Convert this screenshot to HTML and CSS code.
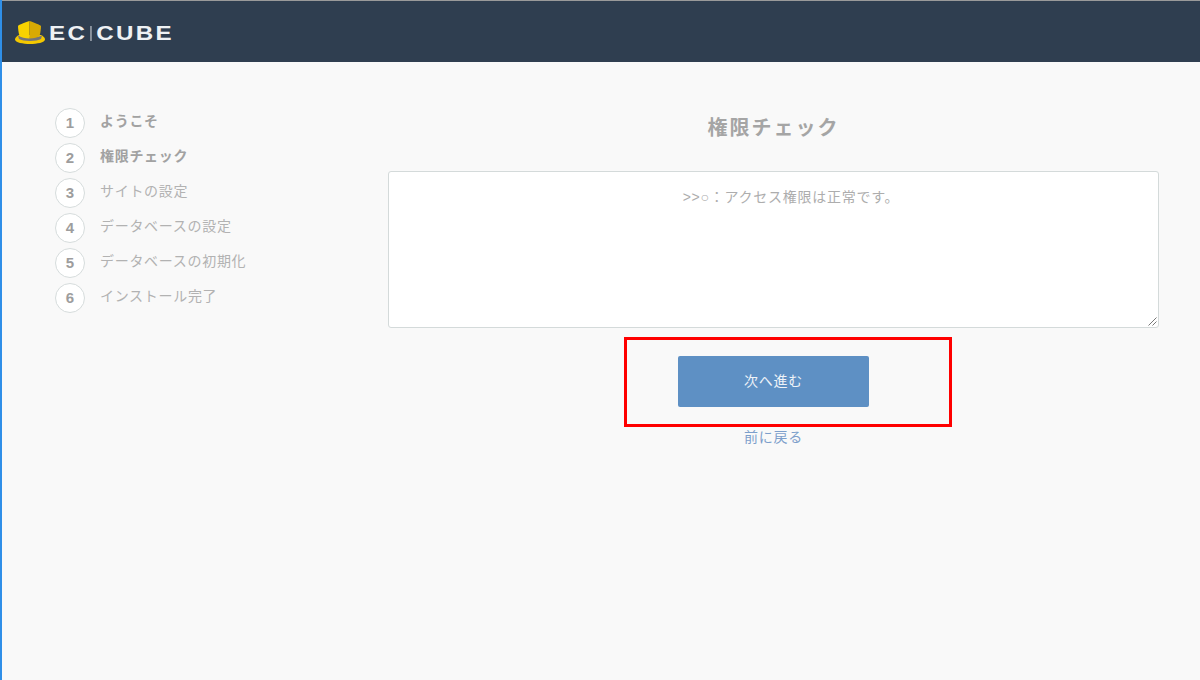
FILE: index.html
```html
<!DOCTYPE html>
<html lang="ja">
<head>
<meta charset="utf-8">
<title>EC-CUBE インストール</title>
<link rel="stylesheet" href="styles.css">
</head>
<body>
<header class="topbar">
  <svg class="hat" width="32" height="25" viewBox="0 0 32 25" aria-hidden="true">
    <path d="M1 19.500C1 17.500 3 16 5 15L27 15C29 16 31 17.500 31 19.500C31 22.500 23 24 16 24C9 24 1 22.500 1 19.500Z" fill="#f3c800"/>
    <path d="M4 15.500C8 18 24 18 28 15.500L27 19C23 21.500 9 21.500 5 19Z" fill="#74747a"/>
    <path d="M4 6C4.500 5 9 3 15.500 1L15.500 18.500C11 18.500 7 17.500 5.500 16C4.500 12.500 4 9 4 6Z" fill="#f8d200"/>
    <path d="M15.500 1C20 2.500 26 5 27 6C27 9 26.500 12.500 25.500 16C24 17.500 20 18.500 15.500 18.500Z" fill="#d8aa04"/>
  </svg>
  <div class="wordmark">EC<span class="bar"></span>CUBE</div>
</header>
<div class="page">
  <nav class="steps">
    <div class="step done"><span class="num">1</span><span class="label">ようこそ</span></div>
    <div class="step done"><span class="num">2</span><span class="label">権限チェック</span></div>
    <div class="step"><span class="num">3</span><span class="label">サイトの設定</span></div>
    <div class="step"><span class="num">4</span><span class="label">データベースの設定</span></div>
    <div class="step"><span class="num">5</span><span class="label">データベースの初期化</span></div>
    <div class="step"><span class="num">6</span><span class="label">インストール完了</span></div>
  </nav>
  <main class="content">
    <h1 class="title">権限チェック</h1>
    <div class="box">&gt;&gt;○：アクセス権限は正常です。
      <svg class="grip" width="9" height="9" viewBox="0 0 9 9" aria-hidden="true"><path d="M0.500 8.500L8.500 0.500M4.500 8.500L8.500 4.500" stroke="#777" fill="none"/></svg>
    </div>
    <div class="actions">
      <a class="next">次へ進む</a>
      <a class="back">前に戻る</a>
      <div class="callout"></div>
    </div>
  </main>
</div>
</body>
</html>
```
FILE: styles.css
```css
* { box-sizing: border-box; }
html, body { margin: 0; height: 100%; }
body {
  background: #f9f9f9;
  border-left: 2px solid #2f8fe8;
  color: #a8a8a8;
  font-family: "Liberation Sans", "Noto Sans CJK JP", sans-serif;
  font-size: 14px;
  overflow: hidden;
}
.topbar {
  height: 62px;
  margin-left: -2px;
  padding: 19px 0 0 15px;
  background: #2f3e50;
  border-top: 1px solid #9a9a9a;
  border-left: 2px solid #2f8fe8;
  display: flex;
  align-items: flex-start;
}
.hat { flex: none; margin-left: -3px; }
.wordmark {
  margin: 1px 0 0 3px;
  color: #eef1f4;
  font-family: "Liberation Sans", sans-serif;
  font-weight: 700;
  font-size: 21px;
  line-height: 24px;
  letter-spacing: 2px;
  display: flex;
  align-items: center;
  transform: scaleX(1.15);
  transform-origin: left center;
}
.bar { width: 1px; height: 15px; margin: 0 4px 0 3px; background: #c5cbd2; }
.page {
  display: flex;
  padding: 46px 41px 0 53px;
}
.steps { width: 333px; flex: none; display: flex; flex-direction: column; gap: 5px; }
.step { display: flex; align-items: center; height: 30px; gap: 15px; }
.num {
  width: 30px; height: 30px; flex: none;
  padding-bottom: 2px;
  border: 1.500px solid #d6dcdc;
  border-radius: 50%;
  background: #fff;
  display: flex; align-items: center; justify-content: center;
  color: #9d9d9d;
  font-weight: 700;
  font-size: 15px;
}
.label { letter-spacing: 0.700px; color: #b2b2b2; position: relative; top: -3px; }
.done .label { font-weight: 700; color: #a2a2a2; }
.content { flex: 1; display: flex; flex-direction: column; align-items: center; }
.title {
  margin: 0;
  height: 63px;
  padding-top: 5px;
  font-size: 20px;
  line-height: 30px;
  font-weight: 700;
  letter-spacing: 2px;
  color: #a5a5a5;
}
.box {
  width: 771px; height: 157px;
  padding: 15px 0 0 35px;
  background: #fff;
  border: 1px solid #d4dada;
  border-radius: 3px;
  text-align: center;
  font-size: 14px;
  line-height: 20px;
  letter-spacing: 0.750px;
  color: #adadad;
  position: relative;
}
.grip { position: absolute; right: 1px; bottom: 1px; }
.actions {
  position: relative;
  display: flex; flex-direction: column; align-items: center;
  margin-top: 28px;
}
.next {
  width: 191px; height: 51px;
  padding-bottom: 4px;
  display: flex; align-items: center; justify-content: center;
  background: #5e90c4;
  border-radius: 2px;
  color: #eef3f8;
  font-size: 14px;
  letter-spacing: 0.800px;
}
.back { margin-top: 20px; line-height: 20px; color: #7d9fcb; letter-spacing: 0.800px; }
.callout {
  position: absolute;
  left: -54px; top: -19px;
  width: 328px; height: 90px;
  border: 3px solid #f00;
}
```
